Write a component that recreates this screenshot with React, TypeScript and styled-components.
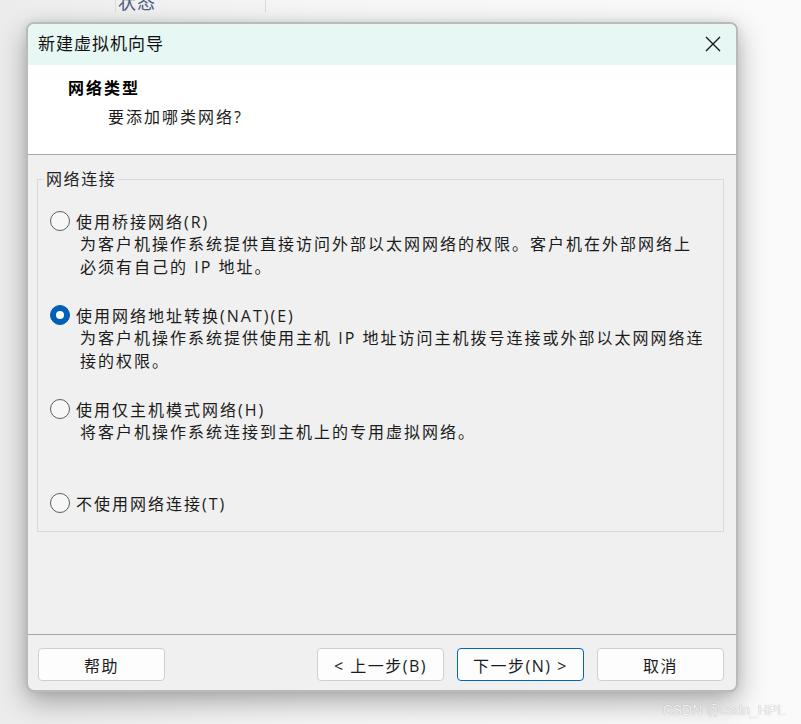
import React from "react";
import styled, { createGlobalStyle } from "styled-components";

const CJK = `"Open Sans", "Noto Sans CJK SC", sans-serif`;

const GlobalStyle = createGlobalStyle`
  html, body {
    margin: 0;
    padding: 0;
  }
  body {
    width: 801px;
    height: 724px;
    overflow: hidden;
    background: #f5f5f5;
    font-family: ${CJK};
    color: #1b1b1b;
  }
`;

const Page = styled.div`
  position: relative;
  box-sizing: border-box;
  width: 801px;
  height: 724px;
  padding-left: 26px;
  background: linear-gradient(90deg, #ececec 0%, #f6f6f6 40%, #fafafa 100%);
`;

const BackStrip = styled.div`
  box-sizing: border-box;
  height: 12px;
  width: 151px;
  margin-left: 89px;
  border-left: 1px solid #dcdcdc;
  border-right: 1px solid #dcdcdc;
  overflow: hidden;
`;

const BackLabel = styled.div`
  margin-top: -8px;
  padding-left: 2px;
  font-size: 18px;
  line-height: 20px;
  letter-spacing: 1px;
  color: #4d5b7e;
`;

const Dialog = styled.div`
  box-sizing: border-box;
  margin-top: 10px;
  width: 712px;
  height: 670px;
  display: flex;
  flex-direction: column;
  border: 2px solid #bababa;
  border-radius: 8px;
  overflow: hidden;
  background: #f0f0f0;
  box-shadow: 0 10px 28px rgba(0, 0, 0, 0.32), 0 0 10px rgba(0, 0, 0, 0.08);
`;

const TitleBar = styled.div`
  height: 41px;
  display: flex;
  align-items: center;
  justify-content: space-between;
  padding: 0 15px 2px 10px;
  box-sizing: border-box;
  background: #e6f7f4;
`;

const Title = styled.div`
  font-size: 17px;
  line-height: 24px;
  letter-spacing: 1px;
  color: #111;
`;

const CloseButton = styled.button`
  display: flex;
  align-items: center;
  justify-content: center;
  width: 16px;
  height: 16px;
  padding: 0;
  border: none;
  background: transparent;
`;

const Header = styled.div`
  height: 90px;
  box-sizing: border-box;
  padding: 11px 0 0 40px;
  background: #fff;
  border-bottom: 1px solid #a6a6a6;
`;

const HeaderTitle = styled.div`
  font-size: 16px;
  font-weight: 700;
  line-height: 24px;
  letter-spacing: 2px;
  color: #000;
`;

const HeaderSub = styled.div`
  margin-top: 5px;
  padding-left: 40px;
  font-size: 16px;
  line-height: 24px;
  letter-spacing: 2px;
  color: #1b1b1b;
`;

const Body = styled.div`
  flex: 1;
  padding: 14px 12px 0 9px;
`;

const Group = styled.fieldset`
  margin: 0;
  padding: 0 0 16px 0;
  min-inline-size: 0;
  border: 1px solid #d9d9d9;
`;

const Legend = styled.legend`
  margin-left: 6px;
  padding: 0 2px;
  font-size: 16px;
  line-height: 20px;
  letter-spacing: 1.6px;
  color: #222;
`;

const Options = styled.div`
  display: flex;
  flex-direction: column;
  gap: 24px;
  padding: 20px 0 0 12px;
`;

const Option = styled.div``;

const OptionRow = styled.label`
  display: flex;
  align-items: center;
  gap: 6px;
  height: 24px;
  font-size: 16px;
  letter-spacing: 2px;
  color: #1b1b1b;
`;

const Radio = styled.span<{ $checked?: boolean }>`
  box-sizing: border-box;
  flex: none;
  width: 20px;
  height: 20px;
  border-radius: 50%;
  display: flex;
  align-items: center;
  justify-content: center;
  border: 1px solid ${(p) => (p.$checked ? "#005fb8" : "#5f5f5f")};
  background: ${(p) => (p.$checked ? "#005fb8" : "#f7f7f7")};

  &::after {
    content: "";
    display: ${(p) => (p.$checked ? "block" : "none")};
    width: 8px;
    height: 8px;
    border-radius: 50%;
    background: #fff;
  }
`;

const Desc = styled.div<{ $lines: number }>`
  min-height: ${(p) => p.$lines * 23}px;
  padding-left: 30px;
  padding-right: 16px;
  font-size: 16px;
  line-height: 23px;
  letter-spacing: 2px;
  color: #1b1b1b;
`;

const Footer = styled.div`
  display: flex;
  align-items: flex-start;
  height: 56px;
  box-sizing: border-box;
  padding: 13px 12px 0 10px;
  border-top: 1px solid #a6a6a6;
`;

const Spacer = styled.div`
  flex: 1;
`;

const ButtonGroup = styled.div`
  display: flex;
  gap: 13px;
`;

const Button = styled.button<{ $primary?: boolean }>`
  box-sizing: border-box;
  width: 127px;
  height: 33px;
  padding: 0;
  border: 1px solid ${(p) => (p.$primary ? "#0067c0" : "#cfcfcf")};
  border-radius: 4px;
  background: #fdfdfd;
  font-family: ${CJK};
  font-size: 16px;
  letter-spacing: 1.5px;
  color: #1b1b1b;
`;

const Watermark = styled.div`
  position: absolute;
  right: 16px;
  bottom: 6px;
  font-family: "Liberation Sans", Arial, sans-serif;
  font-size: 14px;
  color: #f4f4f4;
  text-shadow: 0 0 1px rgba(0, 0, 0, 0.35);
`;

const options = [
  {
    label: "使用桥接网络(R)",
    desc: "为客户机操作系统提供直接访问外部以太网网络的权限。客户机在外部网络上必须有自己的 IP 地址。",
    lines: 2,
  },
  {
    label: "使用网络地址转换(NAT)(E)",
    desc: "为客户机操作系统提供使用主机 IP 地址访问主机拨号连接或外部以太网网络连接的权限。",
    lines: 2,
    checked: true,
  },
  {
    label: "使用仅主机模式网络(H)",
    desc: "将客户机操作系统连接到主机上的专用虚拟网络。",
    lines: 2,
  },
  { label: "不使用网络连接(T)", desc: "", lines: 0 },
];

const CloseIcon = () => (
  <svg width="16" height="16" viewBox="0 0 16 16">
    <path d="M1 1 L15 15 M15 1 L1 15" stroke="#1a1a1a" strokeWidth="1.4" fill="none" />
  </svg>
);

export default function App() {
  return (
    <>
      <GlobalStyle />
      <Page>
        <BackStrip>
          <BackLabel>状态</BackLabel>
        </BackStrip>
        <Dialog>
          <TitleBar>
            <Title>新建虚拟机向导</Title>
            <CloseButton aria-label="关闭">
              <CloseIcon />
            </CloseButton>
          </TitleBar>
          <Header>
            <HeaderTitle>网络类型</HeaderTitle>
            <HeaderSub>要添加哪类网络?</HeaderSub>
          </Header>
          <Body>
            <Group>
              <Legend>网络连接</Legend>
              <Options>
                {options.map((o) => (
                  <Option key={o.label}>
                    <OptionRow>
                      <Radio $checked={o.checked} />
                      {o.label}
                    </OptionRow>
                    {o.lines > 0 && <Desc $lines={o.lines}>{o.desc}</Desc>}
                  </Option>
                ))}
              </Options>
            </Group>
          </Body>
          <Footer>
            <Button>帮助</Button>
            <Spacer />
            <ButtonGroup>
              <Button>&lt; 上一步(B)</Button>
              <Button $primary>下一步(N) &gt;</Button>
              <Button>取消</Button>
            </ButtonGroup>
          </Footer>
        </Dialog>
        <Watermark>CSDN @csdn_HPL</Watermark>
      </Page>
    </>
  );
}
